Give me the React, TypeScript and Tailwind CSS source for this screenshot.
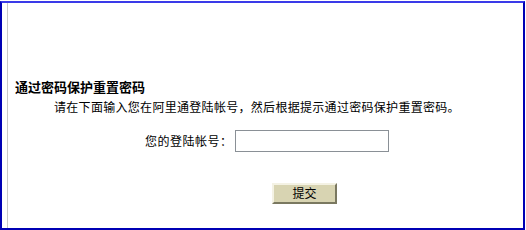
import React from "react";

export default function App() {
  const font = { fontFamily: '"Noto Sans CJK SC", "Noto Sans", sans-serif' };
  return (
    <div className="w-[526px] h-[230px] bg-white" style={font}>
      <div className="mt-[1px] w-[525px] h-[229px] border-t-2 border-l-2 border-r-2 border-b-2 border-t-[#3a3ae8] border-l-[#0000b4] border-r-[#0000b4] border-b-[#0000b4] flex">
        <div className="ml-[5px] h-full border-l border-[#c8c8c8] flex-1 flex flex-col text-black">
          <div className="mt-[76px] ml-[7px] text-[13px] leading-[16px] font-bold">
            通过密码保护重置密码
          </div>
          <div className="mt-[4px] ml-[46px] text-[12px] leading-[16px] tracking-[0.3px]">
            请在下面输入您在阿里通登陆帐号，然后根据提示通过密码保护重置密码。
          </div>
          <div className="mt-[15px] flex items-center">
            <span className="ml-[137px] w-[90px] text-[12px] leading-[16px] tracking-[0.5px]">您的登陆帐号：</span>
            <input
              type="text"
              className="w-[154px] h-[22px] border border-[#8a9096] bg-white outline-none"
            />
          </div>
          <div className="mt-[27px]">
            <button className="ml-[264px] w-[65px] h-[21px] bg-[#d8d4b2] border-2 border-t-[#f4f2e4] border-l-[#f4f2e4] border-r-[#7a7860] border-b-[#7a7860] text-[12px] leading-[14px] text-black">
              提交
            </button>
          </div>
        </div>
      </div>
    </div>
  );
}
